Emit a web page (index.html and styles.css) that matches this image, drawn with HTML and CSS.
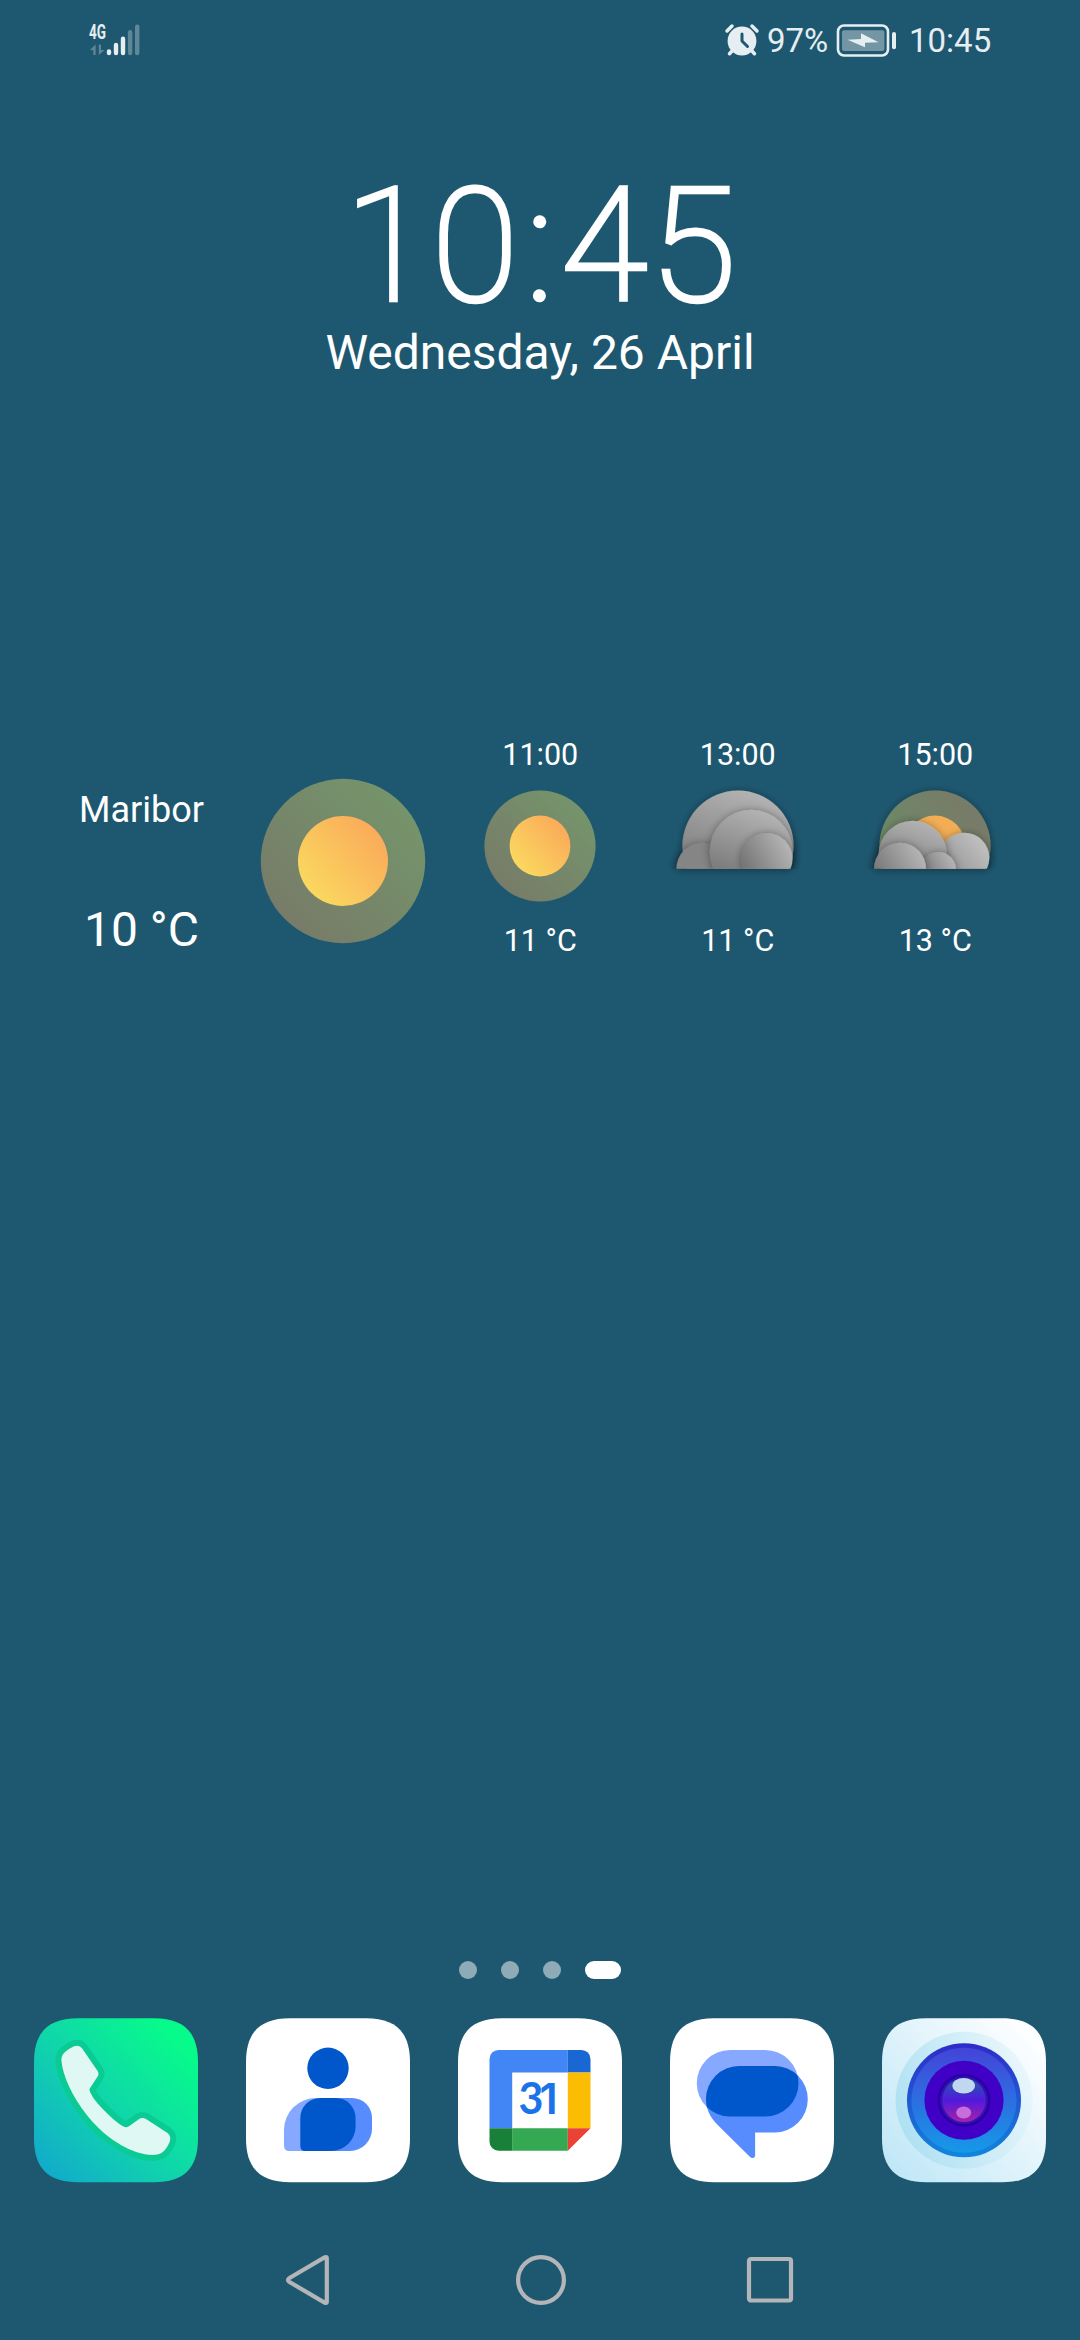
FILE: index.html
```html
<!DOCTYPE html>
<html lang="en">
<head>
<meta charset="utf-8">
<title>Home screen</title>
<link rel="stylesheet" href="styles.css">
</head>
<body>
<div class="screen">
  <header class="status">
    <svg class="signal" viewBox="86 22 56 36" width="56" height="36">
      <text class="network" x="89" y="38.500" textLength="17" lengthAdjust="spacingAndGlyphs">4G</text>
      <g class="dim">
        <path d="M90 50 L95.600 44.500 V55 H93.300 V50 Z"/>
        <path d="M104.600 50 L98.800 55 V44.500 H101 V50 Z"/>
        <rect x="127.900" y="30" width="4.400" height="25.300" rx="2.200"/>
        <rect x="135" y="24.600" width="4.400" height="30.700" rx="2.200"/>
      </g>
      <g class="lit">
        <rect x="106.800" y="49.200" width="4.400" height="6.100" rx="2.200"/>
        <rect x="113.800" y="42.800" width="4.400" height="12.500" rx="2.200"/>
        <rect x="120.800" y="36.600" width="4.400" height="18.700" rx="2.200"/>
      </g>
    </svg>
    <div class="status-right">
      <svg class="alarm" viewBox="724 24 34 32" width="34" height="32">
        <g class="alarm-limbs"><path d="M726 31l5-5M756 31l-5-5M731 51l-2.500 2.700M751 51l2.500 2.700"/></g>
        <circle class="lit" cx="741" cy="41" r="14.400"/>
        <path class="alarm-hand" d="M741 34v7l5.500 5.500"/>
      </svg>
      <span class="percent">97%</span>
      <svg class="battery" viewBox="835 23 61 35" width="61" height="35">
        <rect class="battery-case" x="837" y="25.500" width="50" height="30" rx="6"/>
        <rect class="battery-level" x="841" y="30.300" width="42.400" height="20.700" rx="2"/>
        <rect class="lit" x="891" y="32" width="4" height="17.300" rx="2"/>
        <path class="lit" d="M846.500 39.700 L860 39 V33.200 L877.500 42.300 L864 42.800 V47.300 Z"/>
      </svg>
      <span class="time">10:45</span>
    </div>
  </header>

  <section class="clock">
    <div class="digits"><span class="d1">1</span><span class="d2">0</span><span class="colon">:</span><span class="d3">4</span><span class="d4">5</span></div>
    <div class="date">Wednesday, 26 April</div>
  </section>

  <svg class="defs" width="0" height="0">
    <defs>
      <linearGradient id="sun" x1="0.100" y1="0.900" x2="0.900" y2="0.200"><stop offset="0" stop-color="#fadb5f"/><stop offset="1" stop-color="#faab5a"/></linearGradient>
      <linearGradient id="halo" x1="0.150" y1="0.850" x2="0.850" y2="0.150"><stop offset="0" stop-color="#777c68"/><stop offset="1" stop-color="#75946b"/></linearGradient>
      <linearGradient id="haloDusk" x1="0" y1="0.500" x2="0.700" y2="0.100"><stop offset="0" stop-color="#6c8a66"/><stop offset="1" stop-color="#777c68"/></linearGradient>
      <linearGradient id="cloudDown" x1="0.650" y1="0" x2="0.350" y2="0.800"><stop offset="0" stop-color="#b4b4b4"/><stop offset="1" stop-color="#7c7c7c"/></linearGradient>
      <linearGradient id="cloudSide" x1="1" y1="0.200" x2="0.100" y2="0.700"><stop offset="0" stop-color="#bababa"/><stop offset="1" stop-color="#777"/></linearGradient>
      <linearGradient id="cloudLight" x1="0.800" y1="0.200" x2="0" y2="0.900"><stop offset="0" stop-color="#bdbdbd"/><stop offset="1" stop-color="#8c8c8c"/></linearGradient>
      <filter id="soft" x="-40%" y="-40%" width="180%" height="180%"><feDropShadow dx="0" dy="1" stdDeviation="4" flood-color="#000" flood-opacity="0.400"/></filter>
      <clipPath id="horizon"><rect x="-80" y="-80" width="160" height="102.700"/></clipPath>
      <path id="tile" d="M44 0 H120 C150 0 164 14 164 44 V120 C164 150 150 164 120 164 H44 C14 164 0 150 0 120 V44 C0 14 14 0 44 0 Z"/>
    </defs>
  </svg>

  <section class="weather">
    <div class="now"><div class="city">Maribor</div><div class="now-temp">10 °C</div></div>
    <div class="now-icon">
      <svg viewBox="-83 -83 166 166" width="166" height="166"><circle r="82.200" fill="url(#halo)"/><circle r="45" fill="url(#sun)"/></svg>
    </div>
    <div class="hour">
      <div>11:00</div>
      <svg viewBox="-60 -60 120 120" width="120" height="120"><circle r="55.600" fill="url(#halo)"/><circle r="30.400" fill="url(#sun)"/></svg>
      <div>11 °C</div>
    </div>
    <div class="hour">
      <div>13:00</div>
      <svg viewBox="-60 -60 120 120" width="120" height="120">
        <g filter="url(#soft)"><g clip-path="url(#horizon)">
          <circle r="55.600" fill="url(#cloudDown)"/>
          <circle cx="-35.500" cy="22.700" r="26" fill="#858585" filter="url(#soft)"/>
          <circle cx="13.200" cy="5.300" r="41.500" fill="url(#cloudDown)" filter="url(#soft)"/>
          <circle cx="28.800" cy="12.700" r="25.700" fill="url(#cloudSide)" filter="url(#soft)"/>
        </g></g>
      </svg>
      <div>11 °C</div>
    </div>
    <div class="hour">
      <div>15:00</div>
      <svg viewBox="-60 -60 120 120" width="120" height="120">
        <g filter="url(#soft)"><g clip-path="url(#horizon)">
          <circle r="55.600" fill="url(#haloDusk)"/>
          <circle r="30.400" fill="#f3ae55"/>
          <circle cx="29.300" cy="11.700" r="25" fill="url(#cloudLight)" filter="url(#soft)"/>
          <circle cx="-22.300" cy="8.900" r="34.200" fill="url(#cloudDown)" filter="url(#soft)"/>
          <circle cx="3.300" cy="23.700" r="17.700" fill="url(#cloudSide)" filter="url(#soft)"/>
          <circle cx="-35" cy="22.700" r="26" fill="url(#cloudSide)" filter="url(#soft)"/>
        </g></g>
      </svg>
      <div>13 °C</div>
    </div>
  </section>

  <div class="pager"><i></i><i></i><i></i><i class="current"></i></div>

  <nav class="dock">
    <svg viewBox="0 0 164 164">
      <defs><linearGradient id="phone" x1="0.050" y1="0.950" x2="0.900" y2="0.150"><stop offset="0" stop-color="#12aacb"/><stop offset="0.500" stop-color="#10d5ab"/><stop offset="1" stop-color="#07fb8a"/></linearGradient></defs>
      <use href="#tile" fill="url(#phone)"/>
      <path class="handset-edge" d="M27.400 42 C27 35 34 31 40 28 Q45.500 26.300 48 30 L63.800 53 Q65.300 55.500 63.800 58 L55.300 71 Q56.500 78 68 90 Q82 104.500 89 108 Q92 110 95 108 L105.500 100.500 Q108.700 98.800 112 100.800 L133.500 114.800 Q137.500 118 135.700 123.500 C134 128 131 132 128.500 134 Q123 138 111 136 C90 132 68 116 53 97 C38 78 28.500 57 27.400 42 Z"/>
      <path class="handset" d="M27.400 42 C27 35 34 31 40 28 Q45.500 26.300 48 30 L63.800 53 Q65.300 55.500 63.800 58 L55.300 71 Q56.500 78 68 90 Q82 104.500 89 108 Q92 110 95 108 L105.500 100.500 Q108.700 98.800 112 100.800 L133.500 114.800 Q137.500 118 135.700 123.500 C134 128 131 132 128.500 134 Q123 138 111 136 C90 132 68 116 53 97 C38 78 28.500 57 27.400 42 Z"/>
    </svg>
    <svg viewBox="0 0 164 164">
      <use href="#tile" fill="#fff"/>
      <circle cx="82" cy="50" r="20.700" fill="#0057cc"/>
      <path fill="#86a8ff" d="M70 79.700 H92 V132.700 H43.500 Q38 132.700 38 127.200 V111.700 A32 32 0 0 1 70 79.700 Z"/>
      <path fill="#578cff" d="M74.300 79.700 H106 A20 20 0 0 1 126 99.700 V110.700 A22 22 0 0 1 104 132.700 H74 Z"/>
      <path fill="#0057cc" d="M74.300 79.700 H90 A20 20 0 0 1 109.600 99.700 V108 A24.700 24.700 0 0 1 85 132.700 H59 Q54.300 132.700 54.300 128 V99.700 A20 20 0 0 1 74.300 79.700 Z"/>
    </svg>
    <svg viewBox="0 0 164 164">
      <use href="#tile" fill="#fff"/>
      <path fill="#4285f4" d="M40.500 31.700 H109.800 V54.300 H54.200 V110 H31.500 V40.700 A9 9 0 0 1 40.500 31.700 Z"/>
      <path fill="#1967d2" d="M109.800 31.700 H123.500 A9 9 0 0 1 132.500 40.700 V54.300 H109.800 Z"/>
      <path fill="#fbbc04" d="M109.800 54.300 H132.500 V110 H109.800 Z"/>
      <path fill="#34a853" d="M54.200 110 H109.800 V132.500 H54.200 Z"/>
      <path fill="#188038" d="M31.500 110 H54.200 V132.500 H40.500 A9 9 0 0 1 31.500 123.500 Z"/>
      <path fill="#ea4335" d="M109.800 110 H132.500 L109.800 132.500 Z"/>
      <text class="day" x="60.500" y="96.200">3</text>
      <text class="day one" x="81.500" y="96.200">1</text>
    </svg>
    <svg viewBox="0 0 164 164">
      <defs><clipPath id="bubble"><rect x="26.800" y="31.700" width="101.700" height="66.600" rx="33.300"/></clipPath></defs>
      <use href="#tile" fill="#fff"/>
      <rect x="26.800" y="31.700" width="101.700" height="66.600" rx="33.300" fill="#86a8ff"/>
      <path fill="#578cff" d="M69.300 47.700 H104.500 A33.300 33.300 0 0 1 104.500 114.300 H85.100 V137 Q85.100 139.800 82.500 139.800 Q81 139.800 79.800 138.500 L48 107 C40 99 36 91 36 81 A33.300 33.300 0 0 1 69.300 47.700 Z"/>
      <rect x="36" y="47.700" width="101.800" height="66.600" rx="33.300" fill="#0057cc" clip-path="url(#bubble)"/>
    </svg>
    <svg viewBox="0 0 164 164">
      <defs>
        <linearGradient id="cam" x1="0" y1="0.900" x2="0.900" y2="0.100"><stop offset="0" stop-color="#bfe7f7"/><stop offset="1" stop-color="#fdfeff"/></linearGradient>
        <linearGradient id="camHalo" x1="0" y1="0.700" x2="1" y2="0.300"><stop offset="0" stop-color="#ace0f2"/><stop offset="1" stop-color="#ebf7fc"/></linearGradient>
        <linearGradient id="ring" x1="0" y1="0" x2="0" y2="1"><stop offset="0" stop-color="#4443d8"/><stop offset="1" stop-color="#1599e8"/></linearGradient>
        <linearGradient id="ringEdge" x1="0" y1="0" x2="0" y2="1"><stop offset="0" stop-color="#2e2bc9"/><stop offset="1" stop-color="#1285dd"/></linearGradient>
        <linearGradient id="lens" x1="0" y1="0" x2="0" y2="1"><stop offset="0" stop-color="#1e60a5"/><stop offset="0.500" stop-color="#5219dc"/><stop offset="1" stop-color="#a821a9"/></linearGradient>
      </defs>
      <use href="#tile" fill="url(#cam)"/>
      <circle cx="82" cy="82" r="68.500" fill="url(#camHalo)"/>
      <circle cx="82" cy="82" r="57" fill="url(#ringEdge)"/>
      <circle cx="82" cy="82" r="52.500" fill="url(#ring)"/>
      <circle cx="82" cy="82" r="39.600" fill="#4000c5"/>
      <circle cx="82" cy="82" r="26.500" fill="#2800a5"/>
      <circle cx="82" cy="82" r="24" fill="#3710b5"/>
      <circle cx="82" cy="82" r="21.800" fill="url(#lens)"/>
      <ellipse cx="81.700" cy="67.500" rx="11.300" ry="7.700" fill="#bfd8f0"/>
      <ellipse cx="81.700" cy="94.300" rx="7.500" ry="6" fill="#c66fda"/>
    </svg>
  </nav>

  <footer class="softkeys">
    <svg viewBox="0 0 52 52"><path d="M41.800 4 V48 Q41.800 49.500 39.500 48.500 L4.500 28 Q1.500 26 4.500 24 L39.500 3.500 Q41.800 2.500 41.800 4 Z"/></svg>
    <svg viewBox="0 0 52 52"><circle cx="26" cy="26" r="22.900"/></svg>
    <svg viewBox="0 0 52 52"><rect x="5" y="5" width="42" height="41.500" rx="2"/></svg>
  </footer>
</div>
</body>
</html>
```
FILE: styles.css
```css
* { box-sizing: border-box; }
body { margin: 0; background: #1e5870; }
.screen {
  width: 1080px; height: 2340px; overflow: hidden;
  display: flex; flex-direction: column;
  background: #1e5870; color: #fff;
  font-family: Roboto, "Noto Sans", sans-serif;
}
svg { display: block; flex: none; overflow: visible; }
.defs { height: 0; }

/* status bar */
.status { height: 80px; display: flex; justify-content: space-between; align-items: flex-start; padding: 22px 87px 0 86px; color: #e6eef2; font-size: 33px; line-height: 38px; }
.status-right { display: flex; }
.alarm { margin: 2px 8px 0 0; }
.battery { margin: 1px 12px 0 6px; }
.percent { width: 63px; white-space: nowrap; }
.time { width: 84px; white-space: nowrap; }
.lit { fill: #e6eef2; }
.dim { fill: #5f8798; }
.network { fill: #e6eef2; font: 700 19.500px Roboto, sans-serif; }
.alarm-limbs { stroke: #e6eef2; stroke-width: 3.500; stroke-linecap: round; }
.alarm-hand { fill: none; stroke: #1e5870; stroke-width: 3; stroke-linecap: round; stroke-linejoin: round; }
.battery-case { fill: none; stroke: #e6eef2; stroke-width: 2.600; }
.battery-level { fill: #7496a4; }

/* clock widget */
.clock { height: 580px; padding-top: 84px; }
.digits { display: flex; justify-content: flex-start; height: 154px; padding-left: 345px; line-height: 165px; font-size: 157px; font-weight: 100; -webkit-text-stroke: 4.500px #fff; paint-order: stroke; stroke-linejoin: round; }
.digits span { flex: none; text-align: center; }
.d1 { width: 83px; }
.d2 { width: 94px; }
.colon { width: 36px; }
.d3 { width: 92px; }
.d4 { width: 82px; }
.date { font-size: 48px; line-height: 69px; text-align: center; }

/* weather widget */
.weather { height: 300px; padding: 75px 46px 0 41px; display: grid; grid-template-columns: 203px repeat(4, 197.500px); }
.now { text-align: center; padding: 54px 2px 0 0; }
.city { font-size: 36px; line-height: 42px; }
.now-temp { margin-top: 71px; font-size: 48px; line-height: 56px; }
.now-icon { display: flex; justify-content: center; padding-top: 43px; }
.hour { display: flex; flex-direction: column; align-items: center; padding-top: 2px; font-size: 30.500px; line-height: 36px; }
.hour svg { margin: 13px 0 17px; }

/* page indicator */
.pager { margin-top: 1001px; display: flex; justify-content: center; gap: 24px; height: 18px; }
.pager i { width: 18px; height: 18px; border-radius: 9px; background: #8fabb7; }
.pager .current { width: 36px; background: #fff; }

/* dock */
.dock { margin-top: 39px; padding: 0 34px; display: flex; justify-content: space-between; }
.dock > svg { width: 164px; height: 164.500px; }
.handset { fill: #e0f8f3; }
.handset-edge { fill: none; stroke: #0bcb94; stroke-width: 12; stroke-linejoin: round; }
.day { fill: #1a73e8; font: 700 43px Lato, sans-serif; }
.one { font-family: Inter, sans-serif; font-weight: 600; }

/* navigation keys */
.softkeys { margin-top: 71.500px; padding: 0 284px 0 285px; display: flex; justify-content: space-between; }
.softkeys svg { width: 52px; height: 52px; fill: none; stroke: #b3b5b8; stroke-width: 4.200; }
```
